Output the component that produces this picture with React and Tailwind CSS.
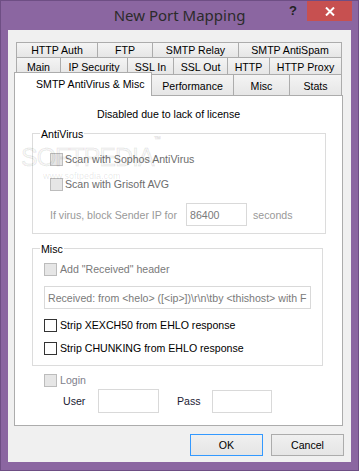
import React from 'react';

const ui = "font-['Liberation_Sans',Arial,sans-serif] text-[10.6px] leading-[14px]";

const row1 = [
  { label: 'HTTP Auth', w: 'w-[82px]' },
  { label: 'FTP', w: 'w-[56px]' },
  { label: 'SMTP Relay', w: 'w-[87px]' },
  { label: 'SMTP AntiSpam', w: 'w-[104px]' },
];

const row2 = [
  { label: 'Main', w: 'w-[45px]' },
  { label: 'IP Security', w: 'w-[68px]' },
  { label: 'SSL In', w: 'w-[47px]' },
  { label: 'SSL Out', w: 'w-[55px]' },
  { label: 'HTTP', w: 'w-[43px]' },
  { label: 'HTTP Proxy', w: 'w-[73px]' },
];

const row3 = [
  { label: 'Performance', w: 'w-[83px]' },
  { label: 'Misc', w: 'w-[57px]' },
  { label: 'Stats', w: 'w-[53px]' },
];

function Tab({ label, w, first, extra = '' }) {
  return (
    <div
      className={`${w} ${first ? '' : '-ml-px'} ${extra} flex items-center justify-center border border-b-0 border-[#acacac] bg-linear-to-b from-[#f4f4f4] to-[#e6e6e6] text-black whitespace-nowrap`}
    >
      {label}
    </div>
  );
}

function Box({ disabled }) {
  return disabled ? (
    <span className="w-[13px] h-[13px] shrink-0 border border-[#bcbcbc] bg-[#e6e6e6]" />
  ) : (
    <span className="w-[13px] h-[13px] shrink-0 border border-[#333333] bg-white" />
  );
}

function Group({ label, className, children }) {
  return (
    <div className={`relative flex flex-col border border-[#dcdcdc] ${className}`}>
      <span className="absolute -top-[7px] left-[7px] px-[1px] bg-white text-black">{label}</span>
      {children}
    </div>
  );
}

export default function App() {
  return (
    <div className={`relative w-[359px] h-[471px] flex flex-col overflow-hidden bg-[#8b66a1] border border-[#6e4e84] ${ui}`}>
      {/* title bar */}
      <div className="relative h-[29px] flex justify-center pt-[4px]">
        <span className="font-['Noto_Sans',sans-serif] text-[15px] leading-[20px] text-[#2b2b2b]">New Port Mapping</span>
        <div className="absolute -top-px right-[6px] flex items-start">
          <span className="w-[20px] h-[21px] mr-[4px] text-center text-[13px] leading-[22px] font-bold text-[#222222]">?</span>
          <div className="w-[45px] h-[21px] bg-[#c75050] flex items-center justify-center">
            <svg width="10" height="9" viewBox="0 0 10 9" className="mt-[2px]">
              <path d="M1 0.5 L9 8.5 M9 0.5 L1 8.5" stroke="#ffffff" strokeWidth="2" />
            </svg>
          </div>
        </div>
      </div>

      {/* client area */}
      <div className="flex-1 mx-[7px] mb-[8px] bg-[#f0f0f0] flex flex-col pt-[12px]">
        <div className="flex ml-[8px] h-[15px]">
          {row1.map((t, i) => (
            <Tab key={t.label} {...t} first={i === 0} extra="h-[15px]" />
          ))}
        </div>
        <div className="flex ml-[8px] h-[17px]">
          {row2.map((t, i) => (
            <Tab key={t.label} {...t} first={i === 0} extra="h-[17px] pt-[1px]" />
          ))}
        </div>
        <div className="flex items-end ml-[6px] h-[21px]">
          <div className="relative z-10 w-[138px] h-[24px] -mb-px flex items-center pl-[21px] pb-[1px] border border-b-0 border-[#acacac] bg-white text-black whitespace-nowrap">
            SMTP AntiVirus &amp; Misc
          </div>
          {row3.map((t) => (
            <Tab key={t.label} {...t} extra="h-[21px] pt-[2px]" />
          ))}
        </div>

        {/* tab page */}
        <div className="ml-[6px] w-[329px] h-[331px] border border-[#acacac] bg-white flex flex-col">
          <div className="mt-[11px] ml-[82px] h-[14px] text-black">Disabled due to lack of license</div>

          <Group label="AntiVirus" className="mt-[12px] ml-[17px] w-[294px] h-[101px]">
            <div className="mt-[17px] ml-[17px] h-[16px] flex items-center gap-[2px] text-[#6d6d6d]">
              <Box disabled />
              <span>Scan with Sophos AntiVirus</span>
            </div>
            <div className="mt-[9px] ml-[17px] h-[16px] flex items-center gap-[2px] text-[#6d6d6d]">
              <Box disabled />
              <span>Scan with Grisoft AVG</span>
            </div>
            <div className="mt-[11px] ml-[17px] h-[23px] flex items-center text-[#999999]">
              <span className="w-[136px]">If virus, block Sender IP for</span>
              <div className="w-[61px] h-[23px] border border-[#d9d9d9] bg-white px-[3px] flex items-center text-[#7a7a7a]">86400</div>
              <span className="ml-[6px] pt-[1px]">seconds</span>
            </div>
          </Group>

          <Group label="Misc" className="mt-[14px] ml-[17px] w-[291px] h-[118px]">
            <div className="mt-[12px] ml-[11px] h-[16px] flex items-center gap-[3px] text-[#7a7a7a]">
              <Box disabled />
              <span>Add "Received" header</span>
            </div>
            <div className="mt-[9px] ml-[11px] w-[267px] h-[23px] border border-[#d9d9d9] bg-white px-[3px] flex items-center overflow-hidden whitespace-nowrap text-[#7a7a7a]">
              {'Received: from <helo> ([<ip>])\\r\\n\\tby <thishost> with F'}
            </div>
            <div className="mt-[8px] ml-[11px] h-[16px] flex items-center gap-[3px] text-black">
              <Box />
              <span>Strip XEXCH50 from EHLO response</span>
            </div>
            <div className="mt-[7px] ml-[11px] h-[16px] flex items-center gap-[3px] text-black">
              <Box />
              <span>Strip CHUNKING from EHLO response</span>
            </div>
          </Group>

          <div className="mt-[6px] ml-[29px] h-[16px] flex items-center gap-[3px] text-[#80808c]">
            <Box disabled />
            <span>Login</span>
          </div>
          <div className="mt-[1px] ml-[48px] h-[24px] flex items-center text-[#1a1a33]">
            <span className="w-[35px]">User</span>
            <div className="w-[61px] h-[24px] border border-[#d9d9d9] bg-white" />
            <span className="ml-[18px] w-[35px]">Pass</span>
            <div className="w-[60px] h-[23px] border border-[#d9d9d9] bg-white" />
          </div>
        </div>

        {/* buttons */}
        <div className="mt-[8px] flex justify-end gap-[8px] pr-[7px]">
          <button className="w-[73px] h-[22px] border border-[#3399ff] bg-linear-to-b from-[#f0f0f0] to-[#e5e5e5] text-black">OK</button>
          <button className="w-[73px] h-[22px] border border-[#acacac] bg-linear-to-b from-[#f0f0f0] to-[#e5e5e5] text-black">Cancel</button>
        </div>
      </div>

      {/* softpedia watermark */}
      <div className="pointer-events-none absolute left-[20px] top-[141px] flex flex-col">
        <span className="font-['Liberation_Sans',sans-serif] text-[25px] leading-[30px] tracking-[-1px] text-black/[0.04] [-webkit-text-stroke:1px_rgba(0,0,0,0.09)]">
          SOFTPEDIA<sup className="text-[7px] align-top">™</sup>
        </span>
        <span className="ml-[22px] -mt-[2px] text-[9px] leading-[12px] text-black/[0.1]">www.softpedia.com</span>
      </div>
    </div>
  );
}
